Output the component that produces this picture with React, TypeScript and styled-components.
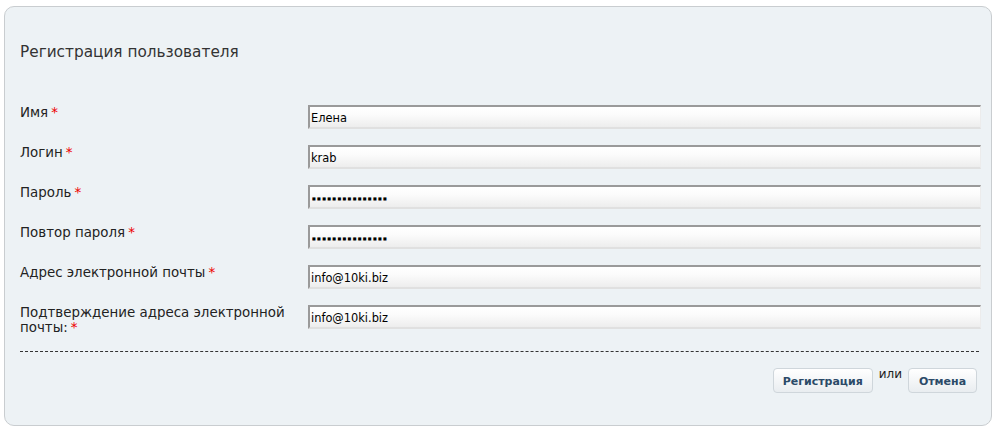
import React from "react";
import styled, { createGlobalStyle } from "styled-components";

const Global = createGlobalStyle`
  html, body { margin: 0; padding: 0; background: #fff; }
  body { font-family: "DejaVu Sans", Verdana, sans-serif; }
`;

const Panel = styled.div`
  box-sizing: border-box;
  margin: 6px 0 0 4px;
  width: 988px;
  height: 420px;
  border: 1px solid #c9cdd0;
  border-radius: 10px;
  background: #edf2f5;
  padding: 35px 10px 0 15px;
`;

const Title = styled.h2`
  margin: 0;
  font-family: "DejaVu Sans", Verdana, sans-serif;
  font-weight: normal;
  font-size: 15.3px;
  line-height: 20px;
  color: #333;
`;

const Form = styled.div`
  display: grid;
  grid-template-columns: 288px 1fr;
  row-gap: 16px;
  margin-top: 43px;
`;

const Label = styled.label`
  font-size: 13.4px;
  line-height: 15px;
  color: #222;
  padding-right: 4px;
`;

const Req = styled.span`
  color: #e00;
  margin-left: 3px;
`;

const Field = styled.input<{ $masked?: boolean }>`
  box-sizing: border-box;
  display: block;
  width: 100%;
  height: 24px;
  margin: 0;
  padding: 1px 1px 0;
  border-style: solid;
  border-width: 2px 1px 2px 2px;
  border-color: #9a9a9a #ececec #e0e0e0 #9a9a9a;
  border-radius: 0;
  background: linear-gradient(#ffffff 0%, #fbfbfb 40%, #ededed 100%);
  font-family: "DejaVu Sans", Verdana, sans-serif;
  font-size: 11.4px;
  color: #000;
  outline: none;
  ${(p) =>
    p.$masked &&
    `
    -webkit-text-security: square;
    font-size: 4px;
    letter-spacing: 1.3px;
    padding: 3px 2px 0;
  `}
`;

const Divider = styled.div`
  margin: 16px 2px 0 0;
  border-top: 1px dashed #333;
`;

const Actions = styled.div`
  display: flex;
  justify-content: flex-end;
  align-items: flex-start;
  gap: 6px;
  margin: 16px 4px 0 0;
`;

const Button = styled.button<{ $w: number }>`
  box-sizing: border-box;
  width: ${(p) => p.$w}px;
  height: 25px;
  border: 1px solid #cfd6db;
  border-radius: 4px;
  background: linear-gradient(#ffffff, #e9edf0);
  font-family: "DejaVu Sans", Verdana, sans-serif;
  font-weight: bold;
  font-size: 11px;
  color: #2b4a68;
  padding: 2px 0 0;
  cursor: pointer;
`;

const Or = styled.span`
  font-size: 12px;
  line-height: 13px;
  color: #222;
`;

const rows: { label: string; value: string; masked?: boolean }[] = [
  { label: "Имя", value: "Елена" },
  { label: "Логин", value: "krab" },
  { label: "Пароль", value: "passwordpasswor", masked: true },
  { label: "Повтор пароля", value: "passwordpasswor", masked: true },
  { label: "Адрес электронной почты", value: "info@10ki.biz" },
  { label: "Подтверждение адреса электронной почты:", value: "info@10ki.biz" },
];

export default function App() {
  return (
    <>
      <Global />
      <Panel>
        <Title>Регистрация пользователя</Title>
        <Form>
          {rows.map((r) => (
            <React.Fragment key={r.label}>
              <Label>
                {r.label}
                <Req>*</Req>
              </Label>
              <Field type="text" $masked={r.masked} defaultValue={r.value} readOnly />
            </React.Fragment>
          ))}
        </Form>
        <Divider />
        <Actions>
          <Button $w={100}>Регистрация</Button>
          <Or>или</Or>
          <Button $w={69}>Отмена</Button>
        </Actions>
      </Panel>
    </>
  );
}
